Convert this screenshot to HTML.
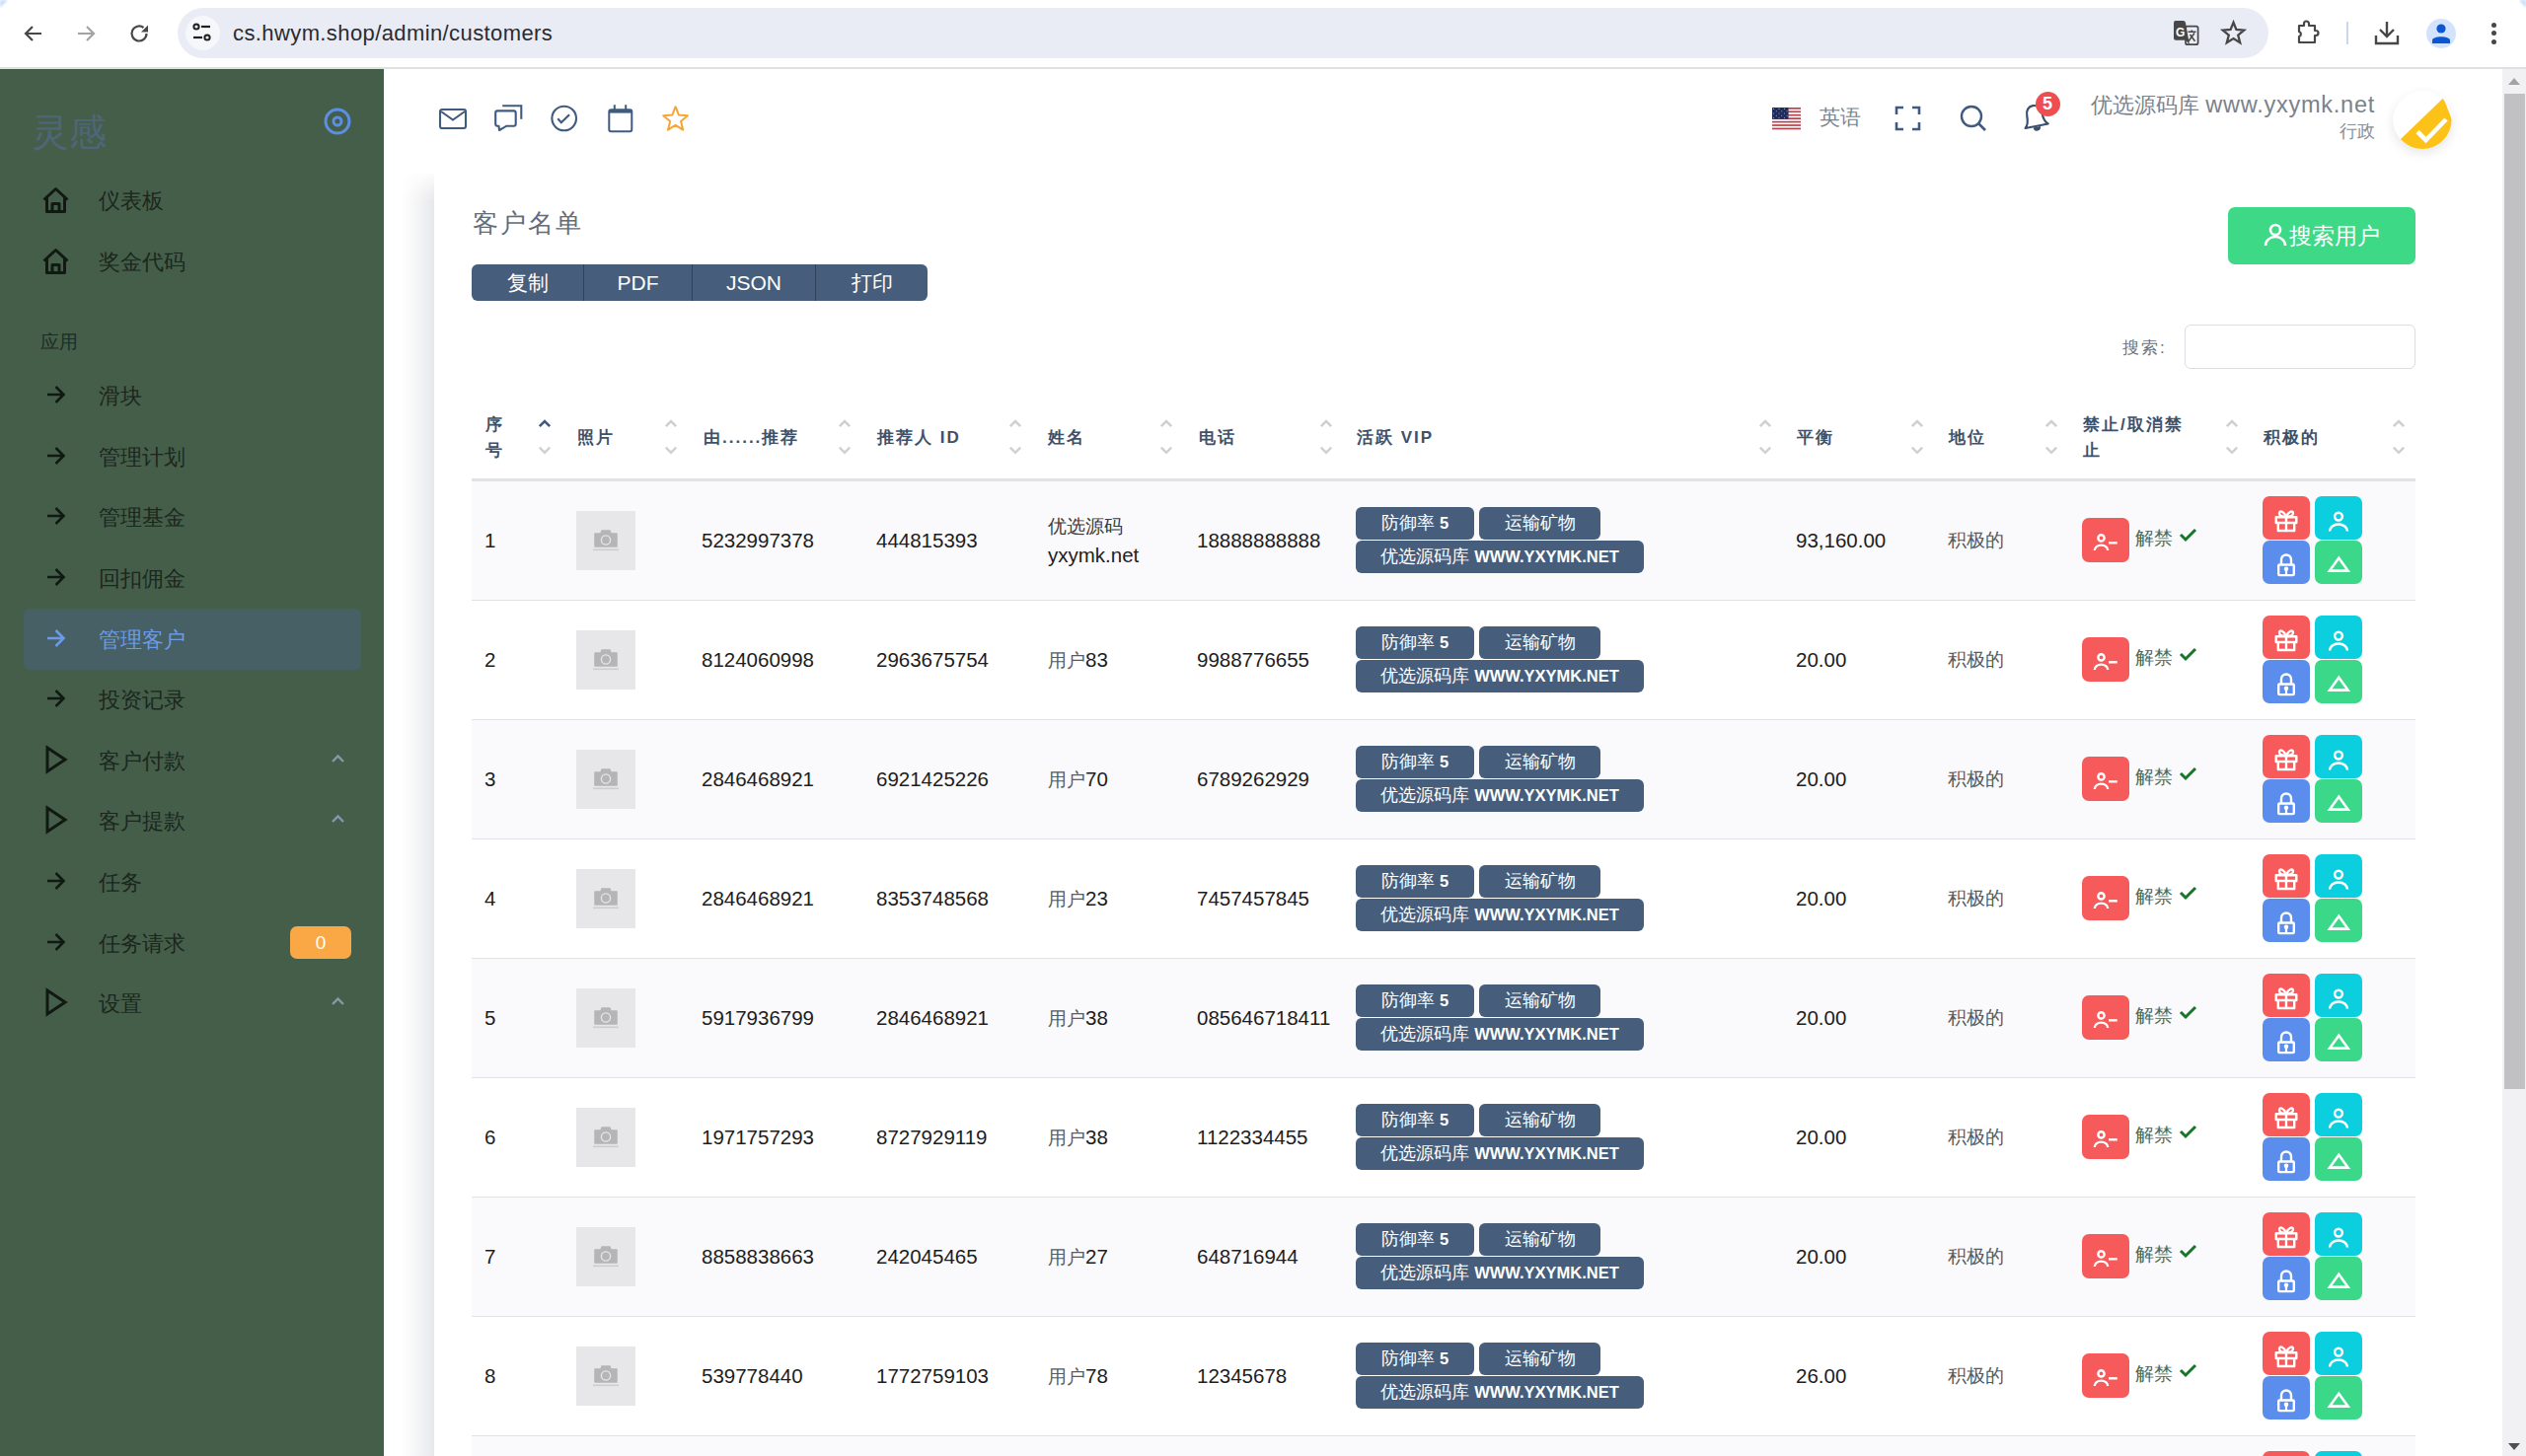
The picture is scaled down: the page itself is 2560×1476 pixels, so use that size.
<!DOCTYPE html><html><head><meta charset="utf-8"><style>
*{box-sizing:border-box}
html,body{margin:0;padding:0}
body{width:2560px;height:1476px;overflow:hidden;position:relative;background:#fff;font-family:"Liberation Sans",sans-serif;color:#1d1d1d}
.a{position:absolute}
svg{position:absolute;overflow:visible}
.chrome{left:0;top:0;width:2560px;height:68px;background:#fff}
.cline{left:0;top:68px;width:2560px;height:2px;background:#dfe0e2}
.pill{left:180px;top:8px;width:2119px;height:51px;border-radius:26px;background:#e9ecf5}
.url{left:236px;top:21px;font-size:22px;letter-spacing:0.4px;color:#2b2b30;white-space:nowrap}
.side{left:0;top:70px;width:389px;height:1406px;background:#455e4a}
.mi{position:absolute;left:100px;font-size:22px;color:#1b271d;white-space:nowrap;line-height:26px}
.main{left:389px;top:70px;width:2147px;height:1406px;background:#fff}
.sbar{left:2536px;top:70px;width:24px;height:1406px;background:#f1f0f3}
.thumb{left:2538px;top:95px;width:21px;height:1009px;background:#c1c1c3}
.th{position:absolute;font-size:17px;font-weight:700;color:#3e5168;letter-spacing:2px;line-height:26px;white-space:nowrap}
.srt{top:424px}
.row{position:absolute;left:478px;width:1970px;height:121px;border-bottom:1px solid #e2e2e6}
.odd{background:#faf9fb}
.c{position:absolute;font-size:20.5px;color:#1d1d1d;white-space:nowrap;line-height:24px}
.ph{position:absolute;left:106px;top:30px;width:60px;height:60px;background:#e7e7e9}
.bd{position:absolute;height:33px;border-radius:6px;background:#465e7b;color:#fff;font-size:18px;line-height:33px;text-align:center;white-space:nowrap}
.bd b{font-weight:700;font-size:16.5px}
.btn{position:absolute;border-radius:7px}
</style></head><body>
<div class="a chrome"></div><div class="a cline"></div><div class="a pill"></div>
<svg style="left:0;top:0" width="12" height="12"><path d="M0 0 H8 L0 8 Z" fill="#c8def8" style="filter:blur(1px)"/></svg><svg style="left:2548px;top:0" width="12" height="12"><path d="M12 0 H5 L12 8 Z" fill="#c8def8" style="filter:blur(1px)"/></svg>
<div class="a" style="left:188px;top:16px;width:35px;height:35px;border-radius:50%;background:#f6f7fb"></div>
<svg style="left:22px;top:22px" width="24" height="24" viewBox="0 0 24 24"><path d="M20 12H5 M11 5 L4 12 L11 19" fill="none" stroke="#474747" stroke-width="2.2"/></svg>
<svg style="left:75px;top:22px" width="24" height="24" viewBox="0 0 24 24"><path d="M4 12H19 M13 5 L20 12 L13 19" fill="none" stroke="#a3a3a3" stroke-width="2.2"/></svg>
<svg style="left:129px;top:22px" width="24" height="24" viewBox="0 0 24 24"><path d="M19.5 12 A7.5 7.5 0 1 1 16.5 6" fill="none" stroke="#474747" stroke-width="2.2"/><path d="M21 3.5 V10.5 H14 Z" fill="#474747"/></svg>
<svg style="left:194px;top:23px" width="22" height="20" viewBox="0 0 22 20"><circle cx="5" cy="4" r="2.6" fill="none" stroke="#1f1f1f" stroke-width="2"/><path d="M10 4H19" stroke="#1f1f1f" stroke-width="2.2"/><circle cx="16" cy="15" r="2.6" fill="none" stroke="#1f1f1f" stroke-width="2"/><path d="M2 15H11" stroke="#1f1f1f" stroke-width="2.2"/></svg>
<div class="a url">cs.hwym.shop/admin/customers</div>
<svg style="left:2202px;top:20px" width="28" height="27" viewBox="0 0 28 27"><path d="M3 1 H10.5 Q12.5 1 13 3 L17 25.5 L13.2 20.8 H3 Q1 20.8 1 18.8 V3 Q1 1 3 1 Z" fill="#474747"/><rect x="13" y="6.6" width="12.6" height="18.6" rx="2" fill="none" stroke="#474747" stroke-width="1.7"/><text x="3" y="16.6" font-size="12" font-weight="700" fill="#fff" font-family="Liberation Sans">G</text><path d="M15.5 12.2 H23.5 M19.3 10.5 V12.2 M16 21.8 L22 13.5 M17.5 15 L22.5 21.8" stroke="#474747" stroke-width="1.5" fill="none"/></svg>
<svg style="left:2250px;top:20px" width="27" height="26" viewBox="0 0 27 26"><path d="M13.5 2.8 L16.4 10 L24.2 10.6 L18.2 15.6 L20.2 23.3 L13.5 19.1 L6.8 23.3 L8.8 15.6 L2.8 10.6 L10.6 10 Z" fill="none" stroke="#474747" stroke-width="2.3" stroke-linejoin="miter"/></svg>
<svg style="left:2327px;top:19px" width="26" height="26" viewBox="0 0 26 26"><path d="M3 7 H8 V5 A2.5 2.5 0 0 1 13 5 V7 H19 V12 H20 A2.5 2.5 0 0 1 20 17 H19 V24 H3 V18 A2.6 2.6 0 0 0 3 13 Z" fill="none" stroke="#474747" stroke-width="2.2" stroke-linejoin="round"/></svg>
<div class="a" style="left:2378px;top:22px;width:2px;height:23px;background:#c9d7ef"></div>
<svg style="left:2406px;top:21px" width="26" height="25" viewBox="0 0 26 25"><path d="M13 1 V15 M6 9 L13 16 L20 9 M2 15 V23 H24 V15" fill="none" stroke="#474747" stroke-width="2.4"/></svg>
<div class="a" style="left:2459px;top:19px;width:30px;height:30px;border-radius:50%;background:#d3e3fd"></div>
<svg style="left:2462px;top:23px" width="24" height="22" viewBox="0 0 24 22"><circle cx="12" cy="6" r="4.6" fill="#0b57d0"/><path d="M3 21 V18 C3 13 21 13 21 18 V21 Z" fill="#0b57d0"/></svg>
<div class="a" style="left:2525px;top:22.5px;width:5px;height:5px;border-radius:50%;background:#474747"></div>
<div class="a" style="left:2525px;top:31.0px;width:5px;height:5px;border-radius:50%;background:#474747"></div>
<div class="a" style="left:2525px;top:39.5px;width:5px;height:5px;border-radius:50%;background:#474747"></div>
<div class="a side"></div>
<div class="a" style="left:32px;top:111px;font-size:38px;color:#4e6679;line-height:46px">灵感</div>
<svg style="left:326px;top:107px" width="32" height="32" viewBox="0 0 32 32"><circle cx="16" cy="16" r="12" fill="none" stroke="#5c8fe4" stroke-width="3"/><circle cx="16" cy="16" r="4" fill="none" stroke="#5c8fe4" stroke-width="3"/></svg>
<svg style="left:42px;top:189px" width="29" height="28" viewBox="0 0 29 28"><path d="M2.5 13.5 L14.5 2.5 L26.5 13.5 M5.5 10.5 V25.5 H23.5 V10.5 M11 25.5 V17.5 H18 V25.5" fill="none" stroke="#111a12" stroke-width="3" stroke-linejoin="round"/></svg>
<div class="mi" style="top:191px">仪表板</div>
<svg style="left:42px;top:251px" width="29" height="28" viewBox="0 0 29 28"><path d="M2.5 13.5 L14.5 2.5 L26.5 13.5 M5.5 10.5 V25.5 H23.5 V10.5 M11 25.5 V17.5 H18 V25.5" fill="none" stroke="#111a12" stroke-width="3" stroke-linejoin="round"/></svg>
<div class="mi" style="top:253px">奖金代码</div>
<div class="a" style="left:41px;top:335px;font-size:19px;color:#1f2c22;line-height:24px">应用</div>
<div class="a" style="left:24px;top:617px;width:342px;height:62px;border-radius:6px;background:#466066"></div>
<svg style="left:47px;top:390px" width="20" height="20" viewBox="0 0 20 20"><path d="M1 10 H17.5 M9.5 2 L17.5 10 L9.5 18" fill="none" stroke="#111a12" stroke-width="2.6"/></svg>
<div class="mi" style="top:388.5px;color:#1b271d">滑块</div>
<svg style="left:47px;top:452px" width="20" height="20" viewBox="0 0 20 20"><path d="M1 10 H17.5 M9.5 2 L17.5 10 L9.5 18" fill="none" stroke="#111a12" stroke-width="2.6"/></svg>
<div class="mi" style="top:450.5px;color:#1b271d">管理计划</div>
<svg style="left:47px;top:513px" width="20" height="20" viewBox="0 0 20 20"><path d="M1 10 H17.5 M9.5 2 L17.5 10 L9.5 18" fill="none" stroke="#111a12" stroke-width="2.6"/></svg>
<div class="mi" style="top:511.5px;color:#1b271d">管理基金</div>
<svg style="left:47px;top:575px" width="20" height="20" viewBox="0 0 20 20"><path d="M1 10 H17.5 M9.5 2 L17.5 10 L9.5 18" fill="none" stroke="#111a12" stroke-width="2.6"/></svg>
<div class="mi" style="top:573.5px;color:#1b271d">回扣佣金</div>
<svg style="left:47px;top:637px" width="20" height="20" viewBox="0 0 20 20"><path d="M1 10 H17.5 M9.5 2 L17.5 10 L9.5 18" fill="none" stroke="#6b9be8" stroke-width="2.6"/></svg>
<div class="mi" style="top:635.5px;color:#6b9be8">管理客户</div>
<svg style="left:47px;top:698px" width="20" height="20" viewBox="0 0 20 20"><path d="M1 10 H17.5 M9.5 2 L17.5 10 L9.5 18" fill="none" stroke="#111a12" stroke-width="2.6"/></svg>
<div class="mi" style="top:696.5px;color:#1b271d">投资记录</div>
<svg style="left:46px;top:756px" width="22" height="28" viewBox="0 0 22 28"><path d="M2 2 L20 14 L2 26 Z" fill="none" stroke="#111a12" stroke-width="3" stroke-linejoin="miter"/></svg>
<svg style="left:335px;top:764px" width="15" height="10" viewBox="0 0 15 10"><path d="M2 8 L7.5 2.5 L13 8" fill="none" stroke="#8797ad" stroke-width="2.4"/></svg>
<div class="mi" style="top:758.5px;color:#1b271d">客户付款</div>
<svg style="left:46px;top:817px" width="22" height="28" viewBox="0 0 22 28"><path d="M2 2 L20 14 L2 26 Z" fill="none" stroke="#111a12" stroke-width="3" stroke-linejoin="miter"/></svg>
<svg style="left:335px;top:825px" width="15" height="10" viewBox="0 0 15 10"><path d="M2 8 L7.5 2.5 L13 8" fill="none" stroke="#8797ad" stroke-width="2.4"/></svg>
<div class="mi" style="top:819.5px;color:#1b271d">客户提款</div>
<svg style="left:47px;top:883px" width="20" height="20" viewBox="0 0 20 20"><path d="M1 10 H17.5 M9.5 2 L17.5 10 L9.5 18" fill="none" stroke="#111a12" stroke-width="2.6"/></svg>
<div class="mi" style="top:881.5px;color:#1b271d">任务</div>
<svg style="left:47px;top:945px" width="20" height="20" viewBox="0 0 20 20"><path d="M1 10 H17.5 M9.5 2 L17.5 10 L9.5 18" fill="none" stroke="#111a12" stroke-width="2.6"/></svg>
<div class="mi" style="top:943.5px;color:#1b271d">任务请求</div>
<svg style="left:46px;top:1002px" width="22" height="28" viewBox="0 0 22 28"><path d="M2 2 L20 14 L2 26 Z" fill="none" stroke="#111a12" stroke-width="3" stroke-linejoin="miter"/></svg>
<svg style="left:335px;top:1010px" width="15" height="10" viewBox="0 0 15 10"><path d="M2 8 L7.5 2.5 L13 8" fill="none" stroke="#8797ad" stroke-width="2.4"/></svg>
<div class="mi" style="top:1004.5px;color:#1b271d">设置</div>
<div class="a" style="left:294px;top:939px;width:62px;height:33px;border-radius:7px;background:#f9a845;color:#fff;font-size:19px;line-height:33px;text-align:center">0</div>
<div class="a main"></div>
<div class="a" style="left:406px;top:176px;width:34px;height:1300px;background:linear-gradient(to right,rgba(30,40,60,0),rgba(30,40,60,0.035) 40%,rgba(30,40,60,0.105));-webkit-mask-image:linear-gradient(to bottom,rgba(0,0,0,0.15),#000 28px)"></div>
<div class="a" style="left:440px;top:176px;width:2047px;height:1400px;background:#fff"></div>
<svg style="left:444px;top:109px" width="30" height="24" viewBox="0 0 30 24"><rect x="2" y="2" width="26" height="19" rx="2" fill="none" stroke="#3f5b7f" stroke-width="2.1"/><path d="M3 4 L15 12.5 L27 4" fill="none" stroke="#3f5b7f" stroke-width="2.1"/></svg>
<svg style="left:500px;top:105px" width="32" height="30" viewBox="0 0 32 30"><path d="M9.2 2.2 H28.3 V15.7" fill="none" stroke="#3f5b7f" stroke-width="2.1"/><path d="M4.2 7.4 H20.7 Q22.7 7.4 22.7 9.4 V20.7 Q22.7 22.7 20.7 22.7 H13.5 L6 27 L5.5 22.7 H4.2 Q2.2 22.7 2.2 20.7 V9.4 Q2.2 7.4 4.2 7.4 Z" fill="none" stroke="#3f5b7f" stroke-width="2.1" stroke-linejoin="round"/></svg>
<svg style="left:556px;top:105px" width="31" height="31" viewBox="0 0 31 31"><circle cx="15.7" cy="15" r="12.3" fill="none" stroke="#3f5b7f" stroke-width="2.1"/><path d="M9.3 15.3 L12.8 19.2 L21.1 11.3" fill="none" stroke="#3f5b7f" stroke-width="2.2"/></svg>
<svg style="left:615px;top:104px" width="27" height="32" viewBox="0 0 27 32"><rect x="2.3" y="7.2" width="23" height="22.1" rx="2" fill="none" stroke="#3f5b7f" stroke-width="2"/><rect x="2.3" y="7.2" width="23" height="3.4" fill="#3f5b7f"/><path d="M7.8 2.3 V7.5 M19.2 2.3 V7.5" stroke="#3f5b7f" stroke-width="2"/></svg>
<svg style="left:669px;top:104px" width="32" height="32" viewBox="0 0 32 32"><path d="M15.60 4.20 L18.95 12.59 L27.96 13.18 L21.02 18.96 L23.24 27.72 L15.60 22.90 L7.96 27.72 L10.18 18.96 L3.24 13.18 L12.25 12.59 Z" fill="none" stroke="#f5a534" stroke-width="2" stroke-linejoin="round"/></svg>
<svg style="left:1796px;top:109px" width="29" height="22" viewBox="0 0 29 22"><rect x="0" y="0.00" width="29" height="1.7" fill="#b8424d"/><rect x="0" y="3.43" width="29" height="1.7" fill="#b8424d"/><rect x="0" y="6.86" width="29" height="1.7" fill="#b8424d"/><rect x="0" y="10.29" width="29" height="1.7" fill="#b8424d"/><rect x="0" y="13.72" width="29" height="1.7" fill="#b8424d"/><rect x="0" y="17.15" width="29" height="1.7" fill="#b8424d"/><rect x="0" y="20.58" width="29" height="1.7" fill="#b8424d"/><rect x="0" y="0" width="16.5" height="11.8" fill="#1f2c5c"/><circle cx="1.6" cy="1.4" r="0.55" fill="#aab4dd"/><circle cx="7.0" cy="1.4" r="0.55" fill="#aab4dd"/><circle cx="12.4" cy="1.4" r="0.55" fill="#aab4dd"/><circle cx="4.3" cy="3.7" r="0.55" fill="#aab4dd"/><circle cx="9.7" cy="3.7" r="0.55" fill="#aab4dd"/><circle cx="15.1" cy="3.7" r="0.55" fill="#aab4dd"/><circle cx="1.6" cy="6.0" r="0.55" fill="#aab4dd"/><circle cx="7.0" cy="6.0" r="0.55" fill="#aab4dd"/><circle cx="12.4" cy="6.0" r="0.55" fill="#aab4dd"/><circle cx="4.3" cy="8.3" r="0.55" fill="#aab4dd"/><circle cx="9.7" cy="8.3" r="0.55" fill="#aab4dd"/><circle cx="15.1" cy="8.3" r="0.55" fill="#aab4dd"/><circle cx="1.6" cy="10.6" r="0.55" fill="#aab4dd"/><circle cx="7.0" cy="10.6" r="0.55" fill="#aab4dd"/><circle cx="12.4" cy="10.6" r="0.55" fill="#aab4dd"/></svg>
<div class="a" style="left:1844px;top:106px;font-size:21px;color:#7b8591;line-height:26px">英语</div>
<svg style="left:1920px;top:107px" width="27" height="26" viewBox="0 0 27 26"><path d="M2 9 V2 H9 M18 2 H25 V9 M25 17 V24 H18 M9 24 H2 V17" fill="none" stroke="#3f5b7f" stroke-width="2.6"/></svg>
<svg style="left:1986px;top:106px" width="28" height="27" viewBox="0 0 28 27"><circle cx="12" cy="12" r="10" fill="none" stroke="#3f5b7f" stroke-width="2.4"/><path d="M19.5 19.5 L26 26" stroke="#3f5b7f" stroke-width="2.6"/></svg>
<svg style="left:2047.5px;top:103.5px" width="32" height="34" viewBox="0 0 32 34"><g transform="rotate(-11 14 14)"><path d="M2.5 24 L26 24 C22.5 21 22 17 22 12 C22 6 18.5 3 14.2 3 C10 3 6.5 6 6.5 12 C6.5 17 6 21 2.5 24 Z" fill="none" stroke="#3a4f6b" stroke-width="2.2" stroke-linejoin="round"/><path d="M10.5 25 A3.7 3.9 0 0 0 17.9 25 Z" fill="#3a4f6b"/></g></svg>
<div class="a" style="left:2062.5px;top:93px;width:25px;height:25px;border-radius:50%;background:#f04d51;color:#fff;font-size:18px;font-weight:700;line-height:25px;text-align:center">5</div>
<div class="a" style="left:2000px;top:92px;width:407px;text-align:right;font-size:22px;color:#7b828a;line-height:28px;white-space:nowrap">优选源码库 <span style="font-size:23.5px;letter-spacing:0.75px">www.yxymk.net</span></div>
<div class="a" style="left:2200px;top:121px;width:207px;text-align:right;font-size:18px;color:#8b9096;line-height:24px">行政</div>
<div class="a" style="left:2425px;top:92px;width:60px;height:59px;border-radius:50%;background:#fff;box-shadow:0 4px 12px rgba(0,0,0,0.10)"></div>
<svg style="left:2425px;top:92px" width="60" height="60" viewBox="0 0 60 60"><defs><clipPath id="avc"><circle cx="30" cy="29.4" r="29.6"/></clipPath></defs><path d="M9 48 L51.3 7.3 L80 80 L-20 80 Z" fill="#fcc217" clip-path="url(#avc)"/><path d="M25 41.5 L33.5 50 L54 29" fill="none" stroke="#fff" stroke-width="4.6"/></svg>
<div class="a" style="left:479px;top:210px;font-size:26px;letter-spacing:2px;color:#646d77;line-height:32px">客户名单</div>
<div class="a" style="left:478px;top:268px;width:462px;height:37px;border-radius:6px;background:#465e7b;overflow:hidden">
<div style="position:absolute;left:0px;top:0;width:113px;height:37px;color:#fff;font-size:21px;line-height:37px;text-align:center">复制</div>
<div style="position:absolute;left:113px;top:0;width:110px;height:37px;border-left:1px solid #2f4259;color:#fff;font-size:21px;line-height:37px;text-align:center">PDF</div>
<div style="position:absolute;left:223px;top:0;width:125px;height:37px;border-left:1px solid #2f4259;color:#fff;font-size:21px;line-height:37px;text-align:center">JSON</div>
<div style="position:absolute;left:348px;top:0;width:114px;height:37px;border-left:1px solid #2f4259;color:#fff;font-size:21px;line-height:37px;text-align:center">打印</div>
</div>
<div class="a" style="left:2258px;top:210px;width:190px;height:58px;border-radius:7px;background:#3dd987"></div>
<svg style="left:2294px;top:226px" width="24" height="24" viewBox="0 0 24 24"><circle cx="12" cy="7" r="5" fill="none" stroke="#fff" stroke-width="2.6"/><path d="M2 23 A10 9 0 0 1 22 23" fill="none" stroke="#fff" stroke-width="2.6"/></svg>
<div class="a" style="left:2320px;top:225.5px;font-size:22.5px;color:#fff;line-height:28px">搜索用户</div>
<div class="a" style="left:2151px;top:342px;font-size:17px;letter-spacing:2px;color:#6b7480;line-height:22px">搜索:</div>
<div class="a" style="left:2214px;top:329px;width:234px;height:45px;border-radius:6px;border:1px solid #dcdde3;background:#fff"></div>
<div class="th" style="left:492px;top:418px">序<br>号</div>
<svg class="srt" style="left:545px" width="14" height="40" viewBox="0 0 14 40"><path d="M1.8 8.2 L7 3 L12.2 8.2" fill="none" stroke="#3e5a7e" stroke-width="2.6"/><path d="M1.8 29.6 L7 34.8 L12.2 29.6" fill="none" stroke="#cfd0d4" stroke-width="2.4"/></svg>
<div class="th" style="left:585px;top:431px">照片</div>
<svg class="srt" style="left:673px" width="14" height="40" viewBox="0 0 14 40"><path d="M1.8 8.2 L7 3 L12.2 8.2" fill="none" stroke="#cfd0d4" stroke-width="2.6"/><path d="M1.8 29.6 L7 34.8 L12.2 29.6" fill="none" stroke="#cfd0d4" stroke-width="2.4"/></svg>
<div class="th" style="left:713px;top:431px">由......推荐</div>
<svg class="srt" style="left:849px" width="14" height="40" viewBox="0 0 14 40"><path d="M1.8 8.2 L7 3 L12.2 8.2" fill="none" stroke="#cfd0d4" stroke-width="2.6"/><path d="M1.8 29.6 L7 34.8 L12.2 29.6" fill="none" stroke="#cfd0d4" stroke-width="2.4"/></svg>
<div class="th" style="left:889px;top:431px">推荐人 ID</div>
<svg class="srt" style="left:1022px" width="14" height="40" viewBox="0 0 14 40"><path d="M1.8 8.2 L7 3 L12.2 8.2" fill="none" stroke="#cfd0d4" stroke-width="2.6"/><path d="M1.8 29.6 L7 34.8 L12.2 29.6" fill="none" stroke="#cfd0d4" stroke-width="2.4"/></svg>
<div class="th" style="left:1062px;top:431px">姓名</div>
<svg class="srt" style="left:1175px" width="14" height="40" viewBox="0 0 14 40"><path d="M1.8 8.2 L7 3 L12.2 8.2" fill="none" stroke="#cfd0d4" stroke-width="2.6"/><path d="M1.8 29.6 L7 34.8 L12.2 29.6" fill="none" stroke="#cfd0d4" stroke-width="2.4"/></svg>
<div class="th" style="left:1215px;top:431px">电话</div>
<svg class="srt" style="left:1337px" width="14" height="40" viewBox="0 0 14 40"><path d="M1.8 8.2 L7 3 L12.2 8.2" fill="none" stroke="#cfd0d4" stroke-width="2.6"/><path d="M1.8 29.6 L7 34.8 L12.2 29.6" fill="none" stroke="#cfd0d4" stroke-width="2.4"/></svg>
<div class="th" style="left:1375px;top:431px">活跃 VIP</div>
<svg class="srt" style="left:1782px" width="14" height="40" viewBox="0 0 14 40"><path d="M1.8 8.2 L7 3 L12.2 8.2" fill="none" stroke="#cfd0d4" stroke-width="2.6"/><path d="M1.8 29.6 L7 34.8 L12.2 29.6" fill="none" stroke="#cfd0d4" stroke-width="2.4"/></svg>
<div class="th" style="left:1821px;top:431px">平衡</div>
<svg class="srt" style="left:1936px" width="14" height="40" viewBox="0 0 14 40"><path d="M1.8 8.2 L7 3 L12.2 8.2" fill="none" stroke="#cfd0d4" stroke-width="2.6"/><path d="M1.8 29.6 L7 34.8 L12.2 29.6" fill="none" stroke="#cfd0d4" stroke-width="2.4"/></svg>
<div class="th" style="left:1975px;top:431px">地位</div>
<svg class="srt" style="left:2072px" width="14" height="40" viewBox="0 0 14 40"><path d="M1.8 8.2 L7 3 L12.2 8.2" fill="none" stroke="#cfd0d4" stroke-width="2.6"/><path d="M1.8 29.6 L7 34.8 L12.2 29.6" fill="none" stroke="#cfd0d4" stroke-width="2.4"/></svg>
<div class="th" style="left:2111px;top:418px">禁止/取消禁<br>止</div>
<svg class="srt" style="left:2255px" width="14" height="40" viewBox="0 0 14 40"><path d="M1.8 8.2 L7 3 L12.2 8.2" fill="none" stroke="#cfd0d4" stroke-width="2.6"/><path d="M1.8 29.6 L7 34.8 L12.2 29.6" fill="none" stroke="#cfd0d4" stroke-width="2.4"/></svg>
<div class="th" style="left:2294px;top:431px">积极的</div>
<svg class="srt" style="left:2424px" width="14" height="40" viewBox="0 0 14 40"><path d="M1.8 8.2 L7 3 L12.2 8.2" fill="none" stroke="#cfd0d4" stroke-width="2.6"/><path d="M1.8 29.6 L7 34.8 L12.2 29.6" fill="none" stroke="#cfd0d4" stroke-width="2.4"/></svg>
<div class="a" style="left:478px;top:485px;width:1970px;height:3px;background:#dfe2e6"></div>
<div class="row odd" style="top:488px"></div>
<div class="c" style="left:491px;top:536px">1</div>
<svg style="left:584px;top:518px" width="60" height="60" viewBox="0 0 60 60"><rect width="60" height="60" fill="#e7e7e9"/><path d="M19 23 H25 L26 20 H34 L35 23 H41 V36 H19 Z" fill="#b5b5b7" stroke="#b5b5b7" stroke-width="1.5" stroke-linejoin="round"/><circle cx="30" cy="29.5" r="4.6" fill="#b5b5b7" stroke="#e7e7e9" stroke-width="1.3"/><rect x="17" y="38.5" width="26" height="1.6" fill="#cdcdcf"/></svg>
<div class="c" style="left:711px;top:536px">5232997378</div>
<div class="c" style="left:888px;top:536px">444815393</div>
<div class="c" style="left:1062px;top:521.5px;line-height:24px;font-size:19.2px;color:#3a3a3a">优选源码</div>
<div class="c" style="left:1062px;top:551px;line-height:24px">yxymk.net</div>
<div class="c" style="left:1213px;top:536px">18888888888</div>
<div class="bd" style="left:1374px;top:514px;width:120px">防御率 <b>5</b></div>
<div class="bd" style="left:1499px;top:514px;width:123px">运输矿物</div>
<div class="bd" style="left:1374px;top:548px;width:292px">优选源码库 <b>WWW.YXYMK.NET</b></div>
<div class="c" style="left:1820px;top:536px">93,160.00</div>
<div class="c" style="left:1974px;top:536px;font-size:19px;color:#555b60">积极的</div>
<svg style="left:2110px;top:525px" width="48" height="45" viewBox="0 0 48 45"><rect x="0" y="0" width="48" height="45" rx="7" fill="#f65a5b"/><g fill="none" stroke="#fff" stroke-width="2.4"><circle cx="19.5" cy="20.4" r="3.1"/><path d="M12.8 33 A6.7 5.4 0 0 1 26.2 33"/><path d="M27 25.3 H35.8"/></g></svg>
<div class="c" style="left:2164px;top:534px;font-size:19px;color:#4f6d57">解禁</div>
<svg style="left:2208px;top:535px" width="19" height="14" viewBox="0 0 19 14"><path d="M2 7 L7 12 L17 2" fill="none" stroke="#17762a" stroke-width="3"/></svg>
<svg style="left:2293px;top:503px" width="48" height="44" viewBox="0 0 48 44"><rect x="0" y="0" width="48" height="44" rx="7" fill="#f65a5b"/><g fill="none" stroke="#fff" stroke-width="2.4" stroke-linejoin="round"><rect x="13.7" y="21.2" width="20.6" height="5.8"/><path d="M15.8 27 V35 H32.2 V27 M24 21.2 V35"/><path d="M24 21 C22 15.5 17.2 13.8 17 17.2 C16.8 20 20 21 24 21 C28 21 31.2 20 31 17.2 C30.8 13.8 26 15.5 24 21"/></g></svg>
<svg style="left:2346px;top:503px" width="48" height="44" viewBox="0 0 48 44"><rect x="0" y="0" width="48" height="44" rx="7" fill="#0bcfdf"/><g fill="none" stroke="#fff" stroke-width="2.5"><circle cx="24" cy="20.6" r="3.9"/><path d="M15 35.6 A9 7.2 0 0 1 33 35.6"/></g></svg>
<svg style="left:2293px;top:548px" width="48" height="44" viewBox="0 0 48 44"><rect x="0" y="0" width="48" height="44" rx="7" fill="#5b8ded"/><g fill="none" stroke="#fff" stroke-width="2.4"><rect x="16.2" y="24.5" width="15.6" height="10.6" rx="1"/><path d="M19 24.5 V19.5 A5 5 0 0 1 29 19.5 V24.5"/></g><circle cx="24" cy="28.8" r="2.3" fill="#fff"/><rect x="22.9" y="29" width="2.2" height="5" fill="#fff"/></svg>
<svg style="left:2346px;top:548px" width="48" height="44" viewBox="0 0 48 44"><rect x="0" y="0" width="48" height="44" rx="7" fill="#3cd88a"/><path d="M24.3 17.8 L33.6 30.6 H15 Z" fill="none" stroke="#fff" stroke-width="2.6" stroke-linejoin="miter"/></svg>
<div class="row" style="top:609px"></div>
<div class="c" style="left:491px;top:657px">2</div>
<svg style="left:584px;top:639px" width="60" height="60" viewBox="0 0 60 60"><rect width="60" height="60" fill="#e7e7e9"/><path d="M19 23 H25 L26 20 H34 L35 23 H41 V36 H19 Z" fill="#b5b5b7" stroke="#b5b5b7" stroke-width="1.5" stroke-linejoin="round"/><circle cx="30" cy="29.5" r="4.6" fill="#b5b5b7" stroke="#e7e7e9" stroke-width="1.3"/><rect x="17" y="38.5" width="26" height="1.6" fill="#cdcdcf"/></svg>
<div class="c" style="left:711px;top:657px">8124060998</div>
<div class="c" style="left:888px;top:657px">2963675754</div>
<div class="c" style="left:1062px;top:657px"><span style="color:#5c5c5c;font-size:19px">用户</span>83</div>
<div class="c" style="left:1213px;top:657px">9988776655</div>
<div class="bd" style="left:1374px;top:635px;width:120px">防御率 <b>5</b></div>
<div class="bd" style="left:1499px;top:635px;width:123px">运输矿物</div>
<div class="bd" style="left:1374px;top:669px;width:292px">优选源码库 <b>WWW.YXYMK.NET</b></div>
<div class="c" style="left:1820px;top:657px">20.00</div>
<div class="c" style="left:1974px;top:657px;font-size:19px;color:#555b60">积极的</div>
<svg style="left:2110px;top:646px" width="48" height="45" viewBox="0 0 48 45"><rect x="0" y="0" width="48" height="45" rx="7" fill="#f65a5b"/><g fill="none" stroke="#fff" stroke-width="2.4"><circle cx="19.5" cy="20.4" r="3.1"/><path d="M12.8 33 A6.7 5.4 0 0 1 26.2 33"/><path d="M27 25.3 H35.8"/></g></svg>
<div class="c" style="left:2164px;top:655px;font-size:19px;color:#4f6d57">解禁</div>
<svg style="left:2208px;top:656px" width="19" height="14" viewBox="0 0 19 14"><path d="M2 7 L7 12 L17 2" fill="none" stroke="#17762a" stroke-width="3"/></svg>
<svg style="left:2293px;top:624px" width="48" height="44" viewBox="0 0 48 44"><rect x="0" y="0" width="48" height="44" rx="7" fill="#f65a5b"/><g fill="none" stroke="#fff" stroke-width="2.4" stroke-linejoin="round"><rect x="13.7" y="21.2" width="20.6" height="5.8"/><path d="M15.8 27 V35 H32.2 V27 M24 21.2 V35"/><path d="M24 21 C22 15.5 17.2 13.8 17 17.2 C16.8 20 20 21 24 21 C28 21 31.2 20 31 17.2 C30.8 13.8 26 15.5 24 21"/></g></svg>
<svg style="left:2346px;top:624px" width="48" height="44" viewBox="0 0 48 44"><rect x="0" y="0" width="48" height="44" rx="7" fill="#0bcfdf"/><g fill="none" stroke="#fff" stroke-width="2.5"><circle cx="24" cy="20.6" r="3.9"/><path d="M15 35.6 A9 7.2 0 0 1 33 35.6"/></g></svg>
<svg style="left:2293px;top:669px" width="48" height="44" viewBox="0 0 48 44"><rect x="0" y="0" width="48" height="44" rx="7" fill="#5b8ded"/><g fill="none" stroke="#fff" stroke-width="2.4"><rect x="16.2" y="24.5" width="15.6" height="10.6" rx="1"/><path d="M19 24.5 V19.5 A5 5 0 0 1 29 19.5 V24.5"/></g><circle cx="24" cy="28.8" r="2.3" fill="#fff"/><rect x="22.9" y="29" width="2.2" height="5" fill="#fff"/></svg>
<svg style="left:2346px;top:669px" width="48" height="44" viewBox="0 0 48 44"><rect x="0" y="0" width="48" height="44" rx="7" fill="#3cd88a"/><path d="M24.3 17.8 L33.6 30.6 H15 Z" fill="none" stroke="#fff" stroke-width="2.6" stroke-linejoin="miter"/></svg>
<div class="row odd" style="top:730px"></div>
<div class="c" style="left:491px;top:778px">3</div>
<svg style="left:584px;top:760px" width="60" height="60" viewBox="0 0 60 60"><rect width="60" height="60" fill="#e7e7e9"/><path d="M19 23 H25 L26 20 H34 L35 23 H41 V36 H19 Z" fill="#b5b5b7" stroke="#b5b5b7" stroke-width="1.5" stroke-linejoin="round"/><circle cx="30" cy="29.5" r="4.6" fill="#b5b5b7" stroke="#e7e7e9" stroke-width="1.3"/><rect x="17" y="38.5" width="26" height="1.6" fill="#cdcdcf"/></svg>
<div class="c" style="left:711px;top:778px">2846468921</div>
<div class="c" style="left:888px;top:778px">6921425226</div>
<div class="c" style="left:1062px;top:778px"><span style="color:#5c5c5c;font-size:19px">用户</span>70</div>
<div class="c" style="left:1213px;top:778px">6789262929</div>
<div class="bd" style="left:1374px;top:756px;width:120px">防御率 <b>5</b></div>
<div class="bd" style="left:1499px;top:756px;width:123px">运输矿物</div>
<div class="bd" style="left:1374px;top:790px;width:292px">优选源码库 <b>WWW.YXYMK.NET</b></div>
<div class="c" style="left:1820px;top:778px">20.00</div>
<div class="c" style="left:1974px;top:778px;font-size:19px;color:#555b60">积极的</div>
<svg style="left:2110px;top:767px" width="48" height="45" viewBox="0 0 48 45"><rect x="0" y="0" width="48" height="45" rx="7" fill="#f65a5b"/><g fill="none" stroke="#fff" stroke-width="2.4"><circle cx="19.5" cy="20.4" r="3.1"/><path d="M12.8 33 A6.7 5.4 0 0 1 26.2 33"/><path d="M27 25.3 H35.8"/></g></svg>
<div class="c" style="left:2164px;top:776px;font-size:19px;color:#4f6d57">解禁</div>
<svg style="left:2208px;top:777px" width="19" height="14" viewBox="0 0 19 14"><path d="M2 7 L7 12 L17 2" fill="none" stroke="#17762a" stroke-width="3"/></svg>
<svg style="left:2293px;top:745px" width="48" height="44" viewBox="0 0 48 44"><rect x="0" y="0" width="48" height="44" rx="7" fill="#f65a5b"/><g fill="none" stroke="#fff" stroke-width="2.4" stroke-linejoin="round"><rect x="13.7" y="21.2" width="20.6" height="5.8"/><path d="M15.8 27 V35 H32.2 V27 M24 21.2 V35"/><path d="M24 21 C22 15.5 17.2 13.8 17 17.2 C16.8 20 20 21 24 21 C28 21 31.2 20 31 17.2 C30.8 13.8 26 15.5 24 21"/></g></svg>
<svg style="left:2346px;top:745px" width="48" height="44" viewBox="0 0 48 44"><rect x="0" y="0" width="48" height="44" rx="7" fill="#0bcfdf"/><g fill="none" stroke="#fff" stroke-width="2.5"><circle cx="24" cy="20.6" r="3.9"/><path d="M15 35.6 A9 7.2 0 0 1 33 35.6"/></g></svg>
<svg style="left:2293px;top:790px" width="48" height="44" viewBox="0 0 48 44"><rect x="0" y="0" width="48" height="44" rx="7" fill="#5b8ded"/><g fill="none" stroke="#fff" stroke-width="2.4"><rect x="16.2" y="24.5" width="15.6" height="10.6" rx="1"/><path d="M19 24.5 V19.5 A5 5 0 0 1 29 19.5 V24.5"/></g><circle cx="24" cy="28.8" r="2.3" fill="#fff"/><rect x="22.9" y="29" width="2.2" height="5" fill="#fff"/></svg>
<svg style="left:2346px;top:790px" width="48" height="44" viewBox="0 0 48 44"><rect x="0" y="0" width="48" height="44" rx="7" fill="#3cd88a"/><path d="M24.3 17.8 L33.6 30.6 H15 Z" fill="none" stroke="#fff" stroke-width="2.6" stroke-linejoin="miter"/></svg>
<div class="row" style="top:851px"></div>
<div class="c" style="left:491px;top:899px">4</div>
<svg style="left:584px;top:881px" width="60" height="60" viewBox="0 0 60 60"><rect width="60" height="60" fill="#e7e7e9"/><path d="M19 23 H25 L26 20 H34 L35 23 H41 V36 H19 Z" fill="#b5b5b7" stroke="#b5b5b7" stroke-width="1.5" stroke-linejoin="round"/><circle cx="30" cy="29.5" r="4.6" fill="#b5b5b7" stroke="#e7e7e9" stroke-width="1.3"/><rect x="17" y="38.5" width="26" height="1.6" fill="#cdcdcf"/></svg>
<div class="c" style="left:711px;top:899px">2846468921</div>
<div class="c" style="left:888px;top:899px">8353748568</div>
<div class="c" style="left:1062px;top:899px"><span style="color:#5c5c5c;font-size:19px">用户</span>23</div>
<div class="c" style="left:1213px;top:899px">7457457845</div>
<div class="bd" style="left:1374px;top:877px;width:120px">防御率 <b>5</b></div>
<div class="bd" style="left:1499px;top:877px;width:123px">运输矿物</div>
<div class="bd" style="left:1374px;top:911px;width:292px">优选源码库 <b>WWW.YXYMK.NET</b></div>
<div class="c" style="left:1820px;top:899px">20.00</div>
<div class="c" style="left:1974px;top:899px;font-size:19px;color:#555b60">积极的</div>
<svg style="left:2110px;top:888px" width="48" height="45" viewBox="0 0 48 45"><rect x="0" y="0" width="48" height="45" rx="7" fill="#f65a5b"/><g fill="none" stroke="#fff" stroke-width="2.4"><circle cx="19.5" cy="20.4" r="3.1"/><path d="M12.8 33 A6.7 5.4 0 0 1 26.2 33"/><path d="M27 25.3 H35.8"/></g></svg>
<div class="c" style="left:2164px;top:897px;font-size:19px;color:#4f6d57">解禁</div>
<svg style="left:2208px;top:898px" width="19" height="14" viewBox="0 0 19 14"><path d="M2 7 L7 12 L17 2" fill="none" stroke="#17762a" stroke-width="3"/></svg>
<svg style="left:2293px;top:866px" width="48" height="44" viewBox="0 0 48 44"><rect x="0" y="0" width="48" height="44" rx="7" fill="#f65a5b"/><g fill="none" stroke="#fff" stroke-width="2.4" stroke-linejoin="round"><rect x="13.7" y="21.2" width="20.6" height="5.8"/><path d="M15.8 27 V35 H32.2 V27 M24 21.2 V35"/><path d="M24 21 C22 15.5 17.2 13.8 17 17.2 C16.8 20 20 21 24 21 C28 21 31.2 20 31 17.2 C30.8 13.8 26 15.5 24 21"/></g></svg>
<svg style="left:2346px;top:866px" width="48" height="44" viewBox="0 0 48 44"><rect x="0" y="0" width="48" height="44" rx="7" fill="#0bcfdf"/><g fill="none" stroke="#fff" stroke-width="2.5"><circle cx="24" cy="20.6" r="3.9"/><path d="M15 35.6 A9 7.2 0 0 1 33 35.6"/></g></svg>
<svg style="left:2293px;top:911px" width="48" height="44" viewBox="0 0 48 44"><rect x="0" y="0" width="48" height="44" rx="7" fill="#5b8ded"/><g fill="none" stroke="#fff" stroke-width="2.4"><rect x="16.2" y="24.5" width="15.6" height="10.6" rx="1"/><path d="M19 24.5 V19.5 A5 5 0 0 1 29 19.5 V24.5"/></g><circle cx="24" cy="28.8" r="2.3" fill="#fff"/><rect x="22.9" y="29" width="2.2" height="5" fill="#fff"/></svg>
<svg style="left:2346px;top:911px" width="48" height="44" viewBox="0 0 48 44"><rect x="0" y="0" width="48" height="44" rx="7" fill="#3cd88a"/><path d="M24.3 17.8 L33.6 30.6 H15 Z" fill="none" stroke="#fff" stroke-width="2.6" stroke-linejoin="miter"/></svg>
<div class="row odd" style="top:972px"></div>
<div class="c" style="left:491px;top:1020px">5</div>
<svg style="left:584px;top:1002px" width="60" height="60" viewBox="0 0 60 60"><rect width="60" height="60" fill="#e7e7e9"/><path d="M19 23 H25 L26 20 H34 L35 23 H41 V36 H19 Z" fill="#b5b5b7" stroke="#b5b5b7" stroke-width="1.5" stroke-linejoin="round"/><circle cx="30" cy="29.5" r="4.6" fill="#b5b5b7" stroke="#e7e7e9" stroke-width="1.3"/><rect x="17" y="38.5" width="26" height="1.6" fill="#cdcdcf"/></svg>
<div class="c" style="left:711px;top:1020px">5917936799</div>
<div class="c" style="left:888px;top:1020px">2846468921</div>
<div class="c" style="left:1062px;top:1020px"><span style="color:#5c5c5c;font-size:19px">用户</span>38</div>
<div class="c" style="left:1213px;top:1020px">085646718411</div>
<div class="bd" style="left:1374px;top:998px;width:120px">防御率 <b>5</b></div>
<div class="bd" style="left:1499px;top:998px;width:123px">运输矿物</div>
<div class="bd" style="left:1374px;top:1032px;width:292px">优选源码库 <b>WWW.YXYMK.NET</b></div>
<div class="c" style="left:1820px;top:1020px">20.00</div>
<div class="c" style="left:1974px;top:1020px;font-size:19px;color:#555b60">积极的</div>
<svg style="left:2110px;top:1009px" width="48" height="45" viewBox="0 0 48 45"><rect x="0" y="0" width="48" height="45" rx="7" fill="#f65a5b"/><g fill="none" stroke="#fff" stroke-width="2.4"><circle cx="19.5" cy="20.4" r="3.1"/><path d="M12.8 33 A6.7 5.4 0 0 1 26.2 33"/><path d="M27 25.3 H35.8"/></g></svg>
<div class="c" style="left:2164px;top:1018px;font-size:19px;color:#4f6d57">解禁</div>
<svg style="left:2208px;top:1019px" width="19" height="14" viewBox="0 0 19 14"><path d="M2 7 L7 12 L17 2" fill="none" stroke="#17762a" stroke-width="3"/></svg>
<svg style="left:2293px;top:987px" width="48" height="44" viewBox="0 0 48 44"><rect x="0" y="0" width="48" height="44" rx="7" fill="#f65a5b"/><g fill="none" stroke="#fff" stroke-width="2.4" stroke-linejoin="round"><rect x="13.7" y="21.2" width="20.6" height="5.8"/><path d="M15.8 27 V35 H32.2 V27 M24 21.2 V35"/><path d="M24 21 C22 15.5 17.2 13.8 17 17.2 C16.8 20 20 21 24 21 C28 21 31.2 20 31 17.2 C30.8 13.8 26 15.5 24 21"/></g></svg>
<svg style="left:2346px;top:987px" width="48" height="44" viewBox="0 0 48 44"><rect x="0" y="0" width="48" height="44" rx="7" fill="#0bcfdf"/><g fill="none" stroke="#fff" stroke-width="2.5"><circle cx="24" cy="20.6" r="3.9"/><path d="M15 35.6 A9 7.2 0 0 1 33 35.6"/></g></svg>
<svg style="left:2293px;top:1032px" width="48" height="44" viewBox="0 0 48 44"><rect x="0" y="0" width="48" height="44" rx="7" fill="#5b8ded"/><g fill="none" stroke="#fff" stroke-width="2.4"><rect x="16.2" y="24.5" width="15.6" height="10.6" rx="1"/><path d="M19 24.5 V19.5 A5 5 0 0 1 29 19.5 V24.5"/></g><circle cx="24" cy="28.8" r="2.3" fill="#fff"/><rect x="22.9" y="29" width="2.2" height="5" fill="#fff"/></svg>
<svg style="left:2346px;top:1032px" width="48" height="44" viewBox="0 0 48 44"><rect x="0" y="0" width="48" height="44" rx="7" fill="#3cd88a"/><path d="M24.3 17.8 L33.6 30.6 H15 Z" fill="none" stroke="#fff" stroke-width="2.6" stroke-linejoin="miter"/></svg>
<div class="row" style="top:1093px"></div>
<div class="c" style="left:491px;top:1141px">6</div>
<svg style="left:584px;top:1123px" width="60" height="60" viewBox="0 0 60 60"><rect width="60" height="60" fill="#e7e7e9"/><path d="M19 23 H25 L26 20 H34 L35 23 H41 V36 H19 Z" fill="#b5b5b7" stroke="#b5b5b7" stroke-width="1.5" stroke-linejoin="round"/><circle cx="30" cy="29.5" r="4.6" fill="#b5b5b7" stroke="#e7e7e9" stroke-width="1.3"/><rect x="17" y="38.5" width="26" height="1.6" fill="#cdcdcf"/></svg>
<div class="c" style="left:711px;top:1141px">1971757293</div>
<div class="c" style="left:888px;top:1141px">8727929119</div>
<div class="c" style="left:1062px;top:1141px"><span style="color:#5c5c5c;font-size:19px">用户</span>38</div>
<div class="c" style="left:1213px;top:1141px">1122334455</div>
<div class="bd" style="left:1374px;top:1119px;width:120px">防御率 <b>5</b></div>
<div class="bd" style="left:1499px;top:1119px;width:123px">运输矿物</div>
<div class="bd" style="left:1374px;top:1153px;width:292px">优选源码库 <b>WWW.YXYMK.NET</b></div>
<div class="c" style="left:1820px;top:1141px">20.00</div>
<div class="c" style="left:1974px;top:1141px;font-size:19px;color:#555b60">积极的</div>
<svg style="left:2110px;top:1130px" width="48" height="45" viewBox="0 0 48 45"><rect x="0" y="0" width="48" height="45" rx="7" fill="#f65a5b"/><g fill="none" stroke="#fff" stroke-width="2.4"><circle cx="19.5" cy="20.4" r="3.1"/><path d="M12.8 33 A6.7 5.4 0 0 1 26.2 33"/><path d="M27 25.3 H35.8"/></g></svg>
<div class="c" style="left:2164px;top:1139px;font-size:19px;color:#4f6d57">解禁</div>
<svg style="left:2208px;top:1140px" width="19" height="14" viewBox="0 0 19 14"><path d="M2 7 L7 12 L17 2" fill="none" stroke="#17762a" stroke-width="3"/></svg>
<svg style="left:2293px;top:1108px" width="48" height="44" viewBox="0 0 48 44"><rect x="0" y="0" width="48" height="44" rx="7" fill="#f65a5b"/><g fill="none" stroke="#fff" stroke-width="2.4" stroke-linejoin="round"><rect x="13.7" y="21.2" width="20.6" height="5.8"/><path d="M15.8 27 V35 H32.2 V27 M24 21.2 V35"/><path d="M24 21 C22 15.5 17.2 13.8 17 17.2 C16.8 20 20 21 24 21 C28 21 31.2 20 31 17.2 C30.8 13.8 26 15.5 24 21"/></g></svg>
<svg style="left:2346px;top:1108px" width="48" height="44" viewBox="0 0 48 44"><rect x="0" y="0" width="48" height="44" rx="7" fill="#0bcfdf"/><g fill="none" stroke="#fff" stroke-width="2.5"><circle cx="24" cy="20.6" r="3.9"/><path d="M15 35.6 A9 7.2 0 0 1 33 35.6"/></g></svg>
<svg style="left:2293px;top:1153px" width="48" height="44" viewBox="0 0 48 44"><rect x="0" y="0" width="48" height="44" rx="7" fill="#5b8ded"/><g fill="none" stroke="#fff" stroke-width="2.4"><rect x="16.2" y="24.5" width="15.6" height="10.6" rx="1"/><path d="M19 24.5 V19.5 A5 5 0 0 1 29 19.5 V24.5"/></g><circle cx="24" cy="28.8" r="2.3" fill="#fff"/><rect x="22.9" y="29" width="2.2" height="5" fill="#fff"/></svg>
<svg style="left:2346px;top:1153px" width="48" height="44" viewBox="0 0 48 44"><rect x="0" y="0" width="48" height="44" rx="7" fill="#3cd88a"/><path d="M24.3 17.8 L33.6 30.6 H15 Z" fill="none" stroke="#fff" stroke-width="2.6" stroke-linejoin="miter"/></svg>
<div class="row odd" style="top:1214px"></div>
<div class="c" style="left:491px;top:1262px">7</div>
<svg style="left:584px;top:1244px" width="60" height="60" viewBox="0 0 60 60"><rect width="60" height="60" fill="#e7e7e9"/><path d="M19 23 H25 L26 20 H34 L35 23 H41 V36 H19 Z" fill="#b5b5b7" stroke="#b5b5b7" stroke-width="1.5" stroke-linejoin="round"/><circle cx="30" cy="29.5" r="4.6" fill="#b5b5b7" stroke="#e7e7e9" stroke-width="1.3"/><rect x="17" y="38.5" width="26" height="1.6" fill="#cdcdcf"/></svg>
<div class="c" style="left:711px;top:1262px">8858838663</div>
<div class="c" style="left:888px;top:1262px">242045465</div>
<div class="c" style="left:1062px;top:1262px"><span style="color:#5c5c5c;font-size:19px">用户</span>27</div>
<div class="c" style="left:1213px;top:1262px">648716944</div>
<div class="bd" style="left:1374px;top:1240px;width:120px">防御率 <b>5</b></div>
<div class="bd" style="left:1499px;top:1240px;width:123px">运输矿物</div>
<div class="bd" style="left:1374px;top:1274px;width:292px">优选源码库 <b>WWW.YXYMK.NET</b></div>
<div class="c" style="left:1820px;top:1262px">20.00</div>
<div class="c" style="left:1974px;top:1262px;font-size:19px;color:#555b60">积极的</div>
<svg style="left:2110px;top:1251px" width="48" height="45" viewBox="0 0 48 45"><rect x="0" y="0" width="48" height="45" rx="7" fill="#f65a5b"/><g fill="none" stroke="#fff" stroke-width="2.4"><circle cx="19.5" cy="20.4" r="3.1"/><path d="M12.8 33 A6.7 5.4 0 0 1 26.2 33"/><path d="M27 25.3 H35.8"/></g></svg>
<div class="c" style="left:2164px;top:1260px;font-size:19px;color:#4f6d57">解禁</div>
<svg style="left:2208px;top:1261px" width="19" height="14" viewBox="0 0 19 14"><path d="M2 7 L7 12 L17 2" fill="none" stroke="#17762a" stroke-width="3"/></svg>
<svg style="left:2293px;top:1229px" width="48" height="44" viewBox="0 0 48 44"><rect x="0" y="0" width="48" height="44" rx="7" fill="#f65a5b"/><g fill="none" stroke="#fff" stroke-width="2.4" stroke-linejoin="round"><rect x="13.7" y="21.2" width="20.6" height="5.8"/><path d="M15.8 27 V35 H32.2 V27 M24 21.2 V35"/><path d="M24 21 C22 15.5 17.2 13.8 17 17.2 C16.8 20 20 21 24 21 C28 21 31.2 20 31 17.2 C30.8 13.8 26 15.5 24 21"/></g></svg>
<svg style="left:2346px;top:1229px" width="48" height="44" viewBox="0 0 48 44"><rect x="0" y="0" width="48" height="44" rx="7" fill="#0bcfdf"/><g fill="none" stroke="#fff" stroke-width="2.5"><circle cx="24" cy="20.6" r="3.9"/><path d="M15 35.6 A9 7.2 0 0 1 33 35.6"/></g></svg>
<svg style="left:2293px;top:1274px" width="48" height="44" viewBox="0 0 48 44"><rect x="0" y="0" width="48" height="44" rx="7" fill="#5b8ded"/><g fill="none" stroke="#fff" stroke-width="2.4"><rect x="16.2" y="24.5" width="15.6" height="10.6" rx="1"/><path d="M19 24.5 V19.5 A5 5 0 0 1 29 19.5 V24.5"/></g><circle cx="24" cy="28.8" r="2.3" fill="#fff"/><rect x="22.9" y="29" width="2.2" height="5" fill="#fff"/></svg>
<svg style="left:2346px;top:1274px" width="48" height="44" viewBox="0 0 48 44"><rect x="0" y="0" width="48" height="44" rx="7" fill="#3cd88a"/><path d="M24.3 17.8 L33.6 30.6 H15 Z" fill="none" stroke="#fff" stroke-width="2.6" stroke-linejoin="miter"/></svg>
<div class="row" style="top:1335px"></div>
<div class="c" style="left:491px;top:1383px">8</div>
<svg style="left:584px;top:1365px" width="60" height="60" viewBox="0 0 60 60"><rect width="60" height="60" fill="#e7e7e9"/><path d="M19 23 H25 L26 20 H34 L35 23 H41 V36 H19 Z" fill="#b5b5b7" stroke="#b5b5b7" stroke-width="1.5" stroke-linejoin="round"/><circle cx="30" cy="29.5" r="4.6" fill="#b5b5b7" stroke="#e7e7e9" stroke-width="1.3"/><rect x="17" y="38.5" width="26" height="1.6" fill="#cdcdcf"/></svg>
<div class="c" style="left:711px;top:1383px">539778440</div>
<div class="c" style="left:888px;top:1383px">1772759103</div>
<div class="c" style="left:1062px;top:1383px"><span style="color:#5c5c5c;font-size:19px">用户</span>78</div>
<div class="c" style="left:1213px;top:1383px">12345678</div>
<div class="bd" style="left:1374px;top:1361px;width:120px">防御率 <b>5</b></div>
<div class="bd" style="left:1499px;top:1361px;width:123px">运输矿物</div>
<div class="bd" style="left:1374px;top:1395px;width:292px">优选源码库 <b>WWW.YXYMK.NET</b></div>
<div class="c" style="left:1820px;top:1383px">26.00</div>
<div class="c" style="left:1974px;top:1383px;font-size:19px;color:#555b60">积极的</div>
<svg style="left:2110px;top:1372px" width="48" height="45" viewBox="0 0 48 45"><rect x="0" y="0" width="48" height="45" rx="7" fill="#f65a5b"/><g fill="none" stroke="#fff" stroke-width="2.4"><circle cx="19.5" cy="20.4" r="3.1"/><path d="M12.8 33 A6.7 5.4 0 0 1 26.2 33"/><path d="M27 25.3 H35.8"/></g></svg>
<div class="c" style="left:2164px;top:1381px;font-size:19px;color:#4f6d57">解禁</div>
<svg style="left:2208px;top:1382px" width="19" height="14" viewBox="0 0 19 14"><path d="M2 7 L7 12 L17 2" fill="none" stroke="#17762a" stroke-width="3"/></svg>
<svg style="left:2293px;top:1350px" width="48" height="44" viewBox="0 0 48 44"><rect x="0" y="0" width="48" height="44" rx="7" fill="#f65a5b"/><g fill="none" stroke="#fff" stroke-width="2.4" stroke-linejoin="round"><rect x="13.7" y="21.2" width="20.6" height="5.8"/><path d="M15.8 27 V35 H32.2 V27 M24 21.2 V35"/><path d="M24 21 C22 15.5 17.2 13.8 17 17.2 C16.8 20 20 21 24 21 C28 21 31.2 20 31 17.2 C30.8 13.8 26 15.5 24 21"/></g></svg>
<svg style="left:2346px;top:1350px" width="48" height="44" viewBox="0 0 48 44"><rect x="0" y="0" width="48" height="44" rx="7" fill="#0bcfdf"/><g fill="none" stroke="#fff" stroke-width="2.5"><circle cx="24" cy="20.6" r="3.9"/><path d="M15 35.6 A9 7.2 0 0 1 33 35.6"/></g></svg>
<svg style="left:2293px;top:1395px" width="48" height="44" viewBox="0 0 48 44"><rect x="0" y="0" width="48" height="44" rx="7" fill="#5b8ded"/><g fill="none" stroke="#fff" stroke-width="2.4"><rect x="16.2" y="24.5" width="15.6" height="10.6" rx="1"/><path d="M19 24.5 V19.5 A5 5 0 0 1 29 19.5 V24.5"/></g><circle cx="24" cy="28.8" r="2.3" fill="#fff"/><rect x="22.9" y="29" width="2.2" height="5" fill="#fff"/></svg>
<svg style="left:2346px;top:1395px" width="48" height="44" viewBox="0 0 48 44"><rect x="0" y="0" width="48" height="44" rx="7" fill="#3cd88a"/><path d="M24.3 17.8 L33.6 30.6 H15 Z" fill="none" stroke="#fff" stroke-width="2.6" stroke-linejoin="miter"/></svg>
<div class="row odd" style="top:1456px"></div>
<svg style="left:2293px;top:1471px" width="48" height="44" viewBox="0 0 48 44"><rect x="0" y="0" width="48" height="44" rx="7" fill="#f65a5b"/><g fill="none" stroke="#fff" stroke-width="2.4" stroke-linejoin="round"><rect x="13.7" y="21.2" width="20.6" height="5.8"/><path d="M15.8 27 V35 H32.2 V27 M24 21.2 V35"/><path d="M24 21 C22 15.5 17.2 13.8 17 17.2 C16.8 20 20 21 24 21 C28 21 31.2 20 31 17.2 C30.8 13.8 26 15.5 24 21"/></g></svg>
<svg style="left:2346px;top:1471px" width="48" height="44" viewBox="0 0 48 44"><rect x="0" y="0" width="48" height="44" rx="7" fill="#0bcfdf"/><g fill="none" stroke="#fff" stroke-width="2.5"><circle cx="24" cy="20.6" r="3.9"/><path d="M15 35.6 A9 7.2 0 0 1 33 35.6"/></g></svg>
<div class="a sbar"></div><div class="a thumb"></div>
<svg style="left:2541px;top:78px" width="14" height="9" viewBox="0 0 14 9"><path d="M1 8 L7 1 L13 8 Z" fill="#a3a3a3"/></svg>
<svg style="left:2541px;top:1462px" width="14" height="9" viewBox="0 0 14 9"><path d="M1 1 L7 8 L13 1 Z" fill="#505050"/></svg>
</body></html>
